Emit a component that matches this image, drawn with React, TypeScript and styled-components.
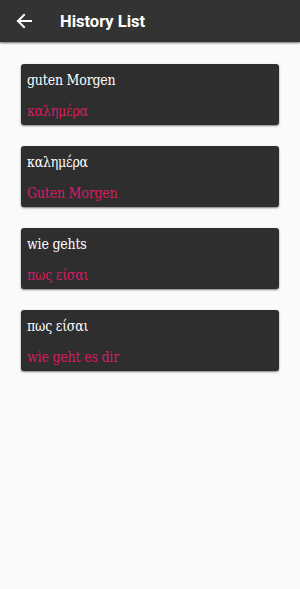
import styled, { createGlobalStyle } from "styled-components";

const items = [
    { src: "guten Morgen", dst: "καλημέρα" },
    { src: "καλημέρα", dst: "Guten Morgen" },
    { src: "wie gehts", dst: "πως είσαι" },
    { src: "πως είσαι", dst: "wie geht es dir" },
];

const App = () => {
    return (
        <>
            <GlobalStyle />
            <Page>
                <Header>
                    <BackButton aria-label="back">
                        <svg width="16" height="16" viewBox="0 0 16 16">
                            <path d="M15 8H2M8 2L2 8l6 6" fill="none" stroke="white" strokeWidth="2" strokeLinecap="square" />
                        </svg>
                    </BackButton>
                    <Title>History List</Title>
                </Header>
                <List>
                    {items.map((item) => (
                        <Card key={item.src}>
                            <Source>{item.src}</Source>
                            <Translation>{item.dst}</Translation>
                        </Card>
                    ))}
                </List>
            </Page>
        </>
    );
};

const GlobalStyle = createGlobalStyle`
body {
    margin: 0;
    background-color: #fafafa;
}
`;

const Page = styled.div`
    width: 300px;
    min-height: 589px;
    background-color: #fafafa;
    display: flex;
    flex-direction: column;
`;

const Header = styled.div`
    height: 42px;
    background-color: #333333;
    box-shadow: 0 1px 2px rgba(0, 0, 0, 0.6);
    display: flex;
    align-items: center;
    padding-left: 16px;
    column-gap: 28px;
    box-sizing: border-box;
`;

const BackButton = styled.div`
    width: 16px;
    height: 16px;
    display: flex;
    align-items: center;
    justify-content: center;
`;

const Title = styled.div`
    font-family: Roboto, "Liberation Sans", sans-serif;
    font-weight: 700;
    font-size: 16.5px;
    color: white;
`;

const List = styled.div`
    display: flex;
    flex-direction: column;
    row-gap: 21px;
    padding: 22px 21px;
`;

const Card = styled.div`
    height: 61px;
    background-color: #2e2e2e;
    border-radius: 3px;
    box-shadow: 0 1px 2px rgba(0, 0, 0, 0.5);
    display: flex;
    flex-direction: column;
    justify-content: space-between;
    padding: 7px 6px 5px;
    box-sizing: border-box;
    font-family: "DejaVu Serif", serif;
    font-stretch: semi-condensed;
    font-size: 14px;
    letter-spacing: -0.2px;
    line-height: 18px;
`;

const Source = styled.div`
    color: white;
`;

const Translation = styled.div`
    color: #d81b60;
`;

export default App;
